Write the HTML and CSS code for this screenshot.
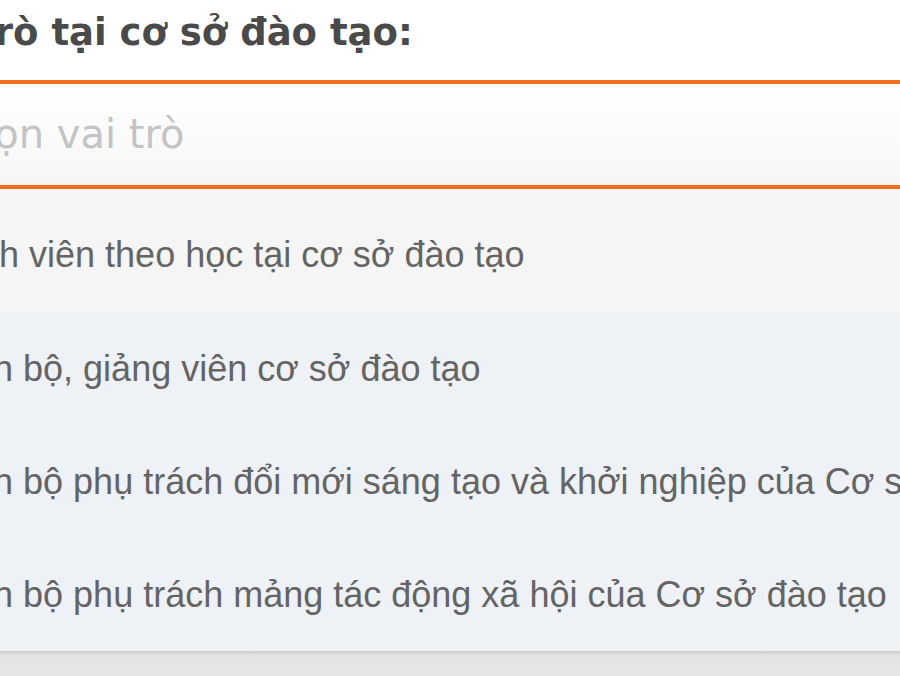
FILE: index.html
```html
<!DOCTYPE html>
<html lang="vi">
<head>
<meta charset="utf-8">
<title>Vai trò</title>
<link rel="stylesheet" href="styles.css">
</head>
<body>
<div class="field">
  <label class="field-label">Vai trò tại cơ sở đào tạo:</label>
  <div class="select-box">
    <span class="placeholder">Chọn vai trò</span>
  </div>
  <ul class="options">
    <li class="option option-hover">Sinh viên theo học tại cơ sở đào tạo</li>
    <li class="option">Cán bộ, giảng viên cơ sở đào tạo</li>
    <li class="option">Cán bộ phụ trách đổi mới sáng tạo và khởi nghiệp của Cơ sở đào tạo</li>
    <li class="option">Cán bộ phụ trách mảng tác động xã hội của Cơ sở đào tạo</li>
  </ul>
</div>
<div class="backdrop"></div>
</body>
</html>
```
FILE: styles.css
```css
html, body {
  margin: 0;
  padding: 0;
  background: #ffffff;
  overflow: hidden;
  width: 900px;
  height: 676px;
}
.field {
  margin-left: -100px;
  width: 1100px;
}
.field-label {
  display: block;
  margin-top: 11px;
  font-family: "DejaVu Sans", sans-serif;
  font-weight: bold;
  font-size: 37px;
  line-height: 43px;
  color: #4a4a4a;
  white-space: nowrap;
}
.select-box {
  margin-top: 26px;
  border-top: 4px solid #f36c1c;
  border-bottom: 4px solid #f36c1c;
  height: 101px;
  background: linear-gradient(#ffffff, #f6f6f6);
  padding-left: 41px;
  display: flex;
  align-items: center;
}
.placeholder {
  font-family: "DejaVu Sans", sans-serif;
  font-size: 40px;
  line-height: 101px;
  color: #c4c4c4;
  white-space: nowrap;
}
.options {
  list-style: none;
  margin: 0;
  padding: 0;
  background: #eef1f5;
  box-shadow: 0 2px 3px rgba(0,0,0,0.12);
  position: relative;
}
.option {
  font-family: "Liberation Sans", Arial, sans-serif;
  font-size: 36px;
  line-height: 113px;
  height: 113px;
  padding-left: 47px;
  color: #646464;
  white-space: nowrap;
}
.option-hover {
  background: #f5f5f5;
  padding-top: 8px;
  height: 115px;
  line-height: 115px;
}
.backdrop {
  height: 40px;
  background: linear-gradient(#e3e3e3, #e8e8e8);
}
```
